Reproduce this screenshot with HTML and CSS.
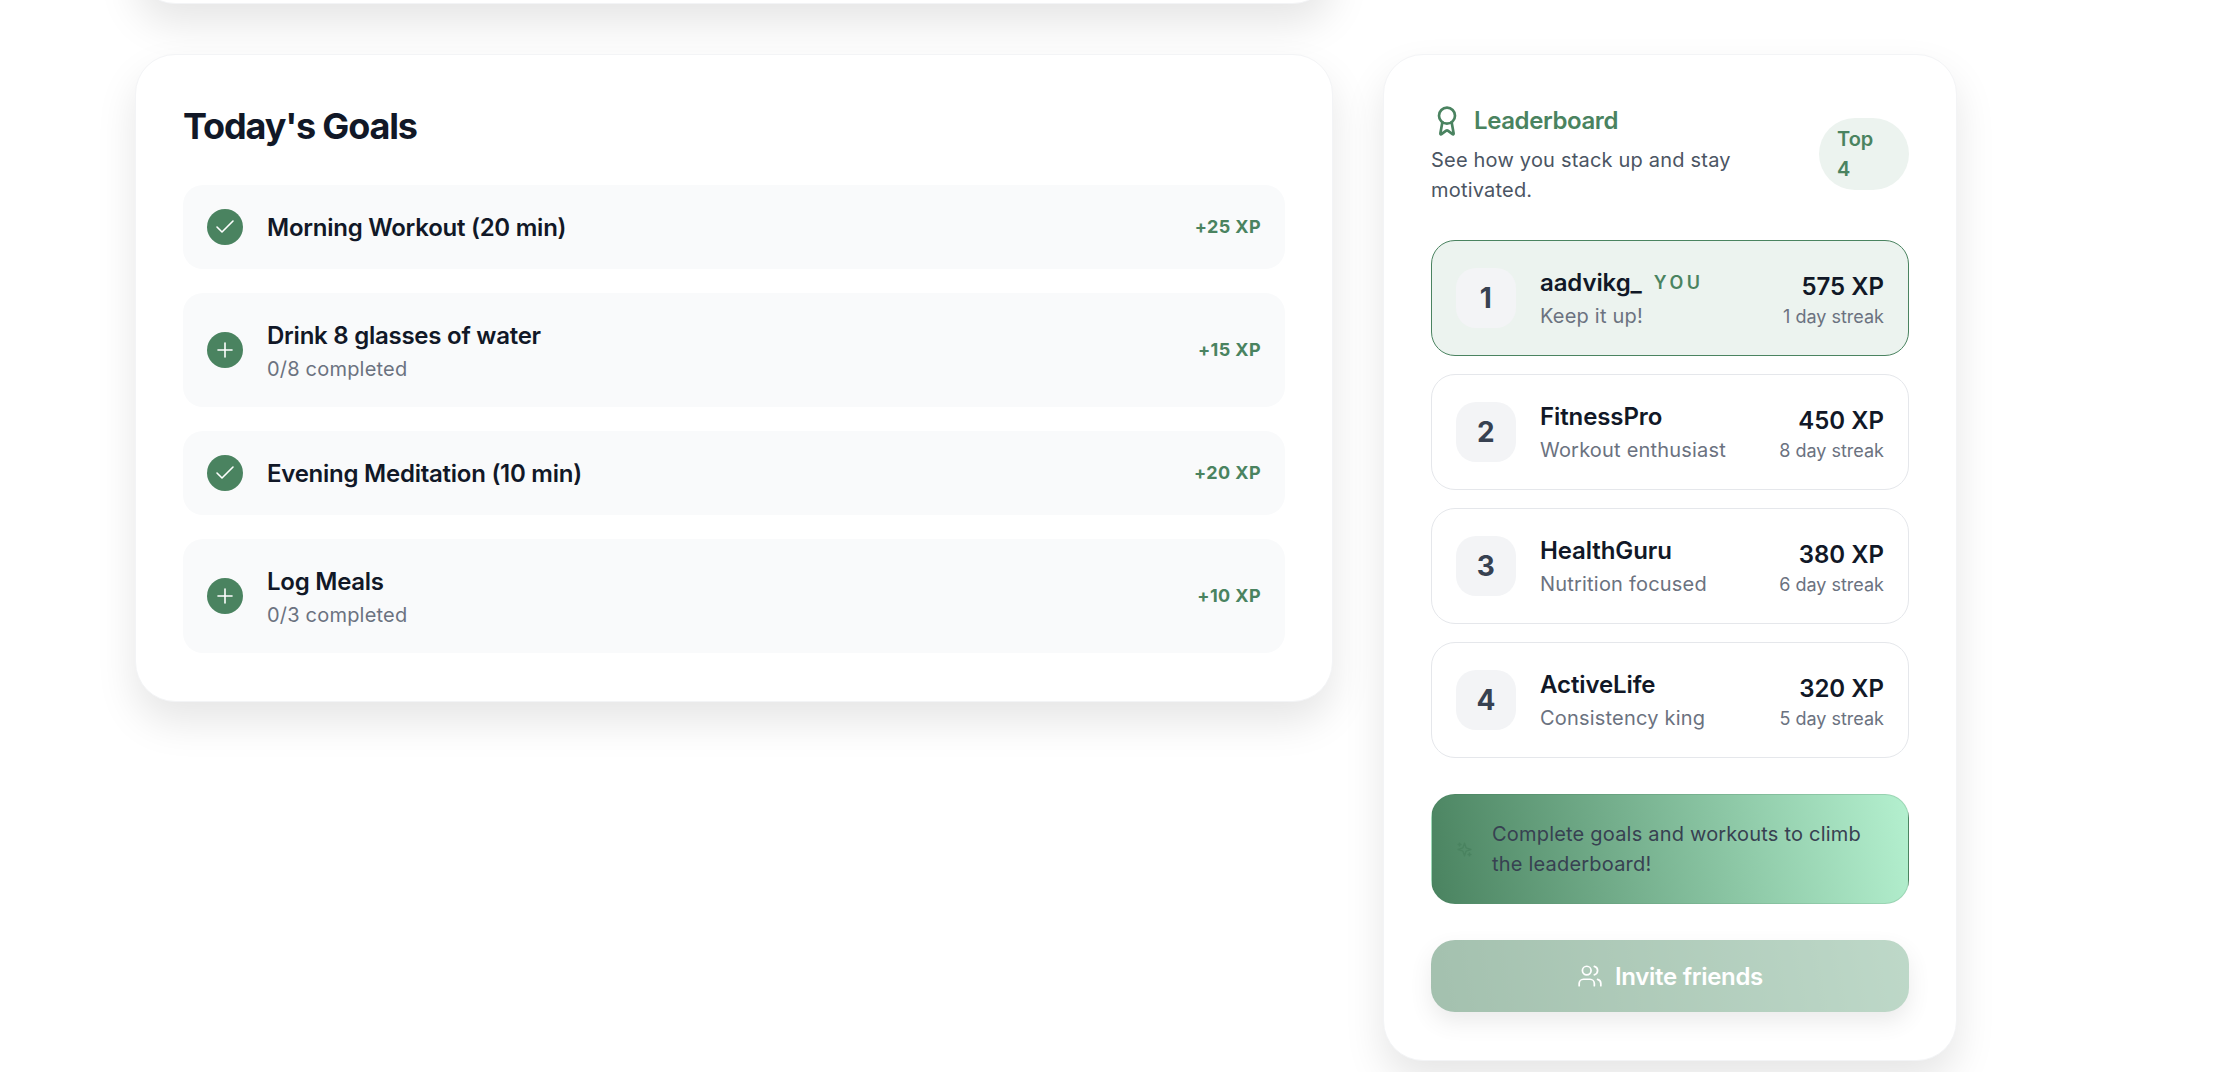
FILE: index.html
```html
<!DOCTYPE html>
<html lang="en">
<head>
    <meta charset="UTF-8">
    <meta name="viewport" content="width=device-width, initial-scale=1.0">
    <title>Dashboard</title>
    <link rel="stylesheet" href="styles.css">
</head>
<body>
    <div class="page">
        <div class="prev-card"></div>
        <main class="columns">
            <section class="card goals">
                <h2>Today's Goals</h2>
                <ul class="goal-list">
                    <li class="goal">
                        <span class="goal-icon">
                            <svg viewBox="0 0 24 24"><path d="M20 6 9 17l-5-5"/></svg>
                        </span>
                        <div class="goal-text">
                            <h3>Morning Workout (20 min)</h3>
                        </div>
                        <span class="goal-xp">+25 XP</span>
                    </li>
                    <li class="goal">
                        <span class="goal-icon">
                            <svg viewBox="0 0 24 24"><path d="M5 12h14"/><path d="M12 5v14"/></svg>
                        </span>
                        <div class="goal-text">
                            <h3>Drink 8 glasses of water</h3>
                            <p>0/8 completed</p>
                        </div>
                        <span class="goal-xp">+15 XP</span>
                    </li>
                    <li class="goal">
                        <span class="goal-icon">
                            <svg viewBox="0 0 24 24"><path d="M20 6 9 17l-5-5"/></svg>
                        </span>
                        <div class="goal-text">
                            <h3>Evening Meditation (10 min)</h3>
                        </div>
                        <span class="goal-xp">+20 XP</span>
                    </li>
                    <li class="goal">
                        <span class="goal-icon">
                            <svg viewBox="0 0 24 24"><path d="M5 12h14"/><path d="M12 5v14"/></svg>
                        </span>
                        <div class="goal-text">
                            <h3>Log Meals</h3>
                            <p>0/3 completed</p>
                        </div>
                        <span class="goal-xp">+10 XP</span>
                    </li>
                </ul>
            </section>

            <aside class="card leaderboard">
                <header class="lb-header">
                    <div class="lb-intro">
                        <div class="lb-title">
                            <svg class="lb-award" viewBox="0 0 24 24">
                                <path d="m15.477 12.89 1.515 8.526a.5.5 0 0 1-.81.47l-3.58-2.687a1 1 0 0 0-1.197 0l-3.586 2.686a.5.5 0 0 1-.81-.469l1.514-8.526"/>
                                <circle cx="12" cy="8" r="6"/>
                            </svg>
                            <h2>Leaderboard</h2>
                        </div>
                        <p>See how you stack up and stay motivated.</p>
                    </div>
                    <span class="lb-badge">Top 4</span>
                </header>

                <ol class="lb-list">
                    <li class="lb-row current">
                        <span class="lb-rank">1</span>
                        <div class="lb-user">
                            <div class="lb-name">aadvikg_ <span class="lb-you">YOU</span></div>
                            <p>Keep it up!</p>
                        </div>
                        <div class="lb-score">
                            <strong>575 XP</strong>
                            <span>1 day streak</span>
                        </div>
                    </li>
                    <li class="lb-row">
                        <span class="lb-rank">2</span>
                        <div class="lb-user">
                            <div class="lb-name">FitnessPro</div>
                            <p>Workout enthusiast</p>
                        </div>
                        <div class="lb-score">
                            <strong>450 XP</strong>
                            <span>8 day streak</span>
                        </div>
                    </li>
                    <li class="lb-row">
                        <span class="lb-rank">3</span>
                        <div class="lb-user">
                            <div class="lb-name">HealthGuru</div>
                            <p>Nutrition focused</p>
                        </div>
                        <div class="lb-score">
                            <strong>380 XP</strong>
                            <span>6 day streak</span>
                        </div>
                    </li>
                    <li class="lb-row">
                        <span class="lb-rank">4</span>
                        <div class="lb-user">
                            <div class="lb-name">ActiveLife</div>
                            <p>Consistency king</p>
                        </div>
                        <div class="lb-score">
                            <strong>320 XP</strong>
                            <span>5 day streak</span>
                        </div>
                    </li>
                </ol>

                <div class="lb-tip">
                    <svg class="lb-sparkle" viewBox="0 0 24 24">
                        <path d="m12 3-1.912 5.813a2 2 0 0 1-1.275 1.275L3 12l5.813 1.912a2 2 0 0 1 1.275 1.275L12 21l1.912-5.813a2 2 0 0 1 1.275-1.275L21 12l-5.813-1.912a2 2 0 0 1-1.275-1.275L12 3Z"/>
                        <path d="M5 3v4"/><path d="M19 17v4"/><path d="M3 5h4"/><path d="M17 19h4"/>
                    </svg>
                    <p>Complete goals and workouts to climb the leaderboard!</p>
                </div>

                <button class="invite" type="button">
                    <svg viewBox="0 0 24 24">
                        <path d="M16 21v-2a4 4 0 0 0-4-4H6a4 4 0 0 0-4 4v2"/>
                        <circle cx="9" cy="7" r="4"/>
                        <path d="M22 21v-2a4 4 0 0 0-3-3.87"/>
                        <path d="M16 3.13a4 4 0 0 1 0 7.75"/>
                    </svg>
                    Invite friends
                </button>
            </aside>
        </main>
    </div>
</body>
</html>
```

FILE: styles.css
```css
* {
    box-sizing: border-box;
    margin: 0;
    padding: 0;
}
html, body {
    height: 1072px;
    overflow: hidden;
}
body {
    font-family: Inter, 'Liberation Sans', sans-serif;
    background-color: #fff;
    color: #111827;
    font-size: 20px;
    line-height: 30px;
    letter-spacing: 0.2px;
}
svg {
    fill: none;
    stroke: currentColor;
    stroke-width: 2;
    stroke-linecap: round;
    stroke-linejoin: round;
    flex-shrink: 0;
}
ul, ol {
    list-style: none;
}
.page {
    padding-left: 135px;
}
.card, .prev-card {
    background-color: #fff;
    border: 1px solid #f3f4f6;
    border-radius: 40px;
    box-shadow: 0 20px 40px rgba(0, 0, 0, 0.1);
}
.prev-card {
    width: 1198px;
    height: 80px;
    margin-top: -76px;
    margin-bottom: 50px;
}
.columns {
    display: grid;
    grid-template-columns: 1198px 574px;
    gap: 50px;
    align-items: start;
}

/* goals */
.goals {
    padding: 48px 47px;
}
.goals h2 {
    font-size: 36px;
    line-height: 46px;
    font-weight: 700;
    letter-spacing: -1.15px;
    margin-bottom: 36px;
}
.goal-list {
    display: flex;
    flex-direction: column;
    gap: 24px;
}
.goal {
    display: flex;
    align-items: center;
    gap: 24px;
    padding: 24px;
    background-color: #f9fafb;
    border-radius: 20px;
}
.goal-icon {
    width: 36px;
    height: 36px;
    border-radius: 50%;
    background-color: #4a8360;
    color: #fff;
    display: flex;
    align-items: center;
    justify-content: center;
}
.goal-icon svg {
    width: 24px;
    height: 24px;
    stroke-width: 1.6;
}
.goal-text {
    flex: 1;
    padding-top: 1px;
    margin-bottom: -1px;
}
.goal-text h3 {
    font-size: 24px;
    line-height: 36px;
    font-weight: 600;
    letter-spacing: -0.25px;
}
.goal-text p {
    color: #6b7280;
}
.goal-xp {
    font-size: 18px;
    font-weight: 700;
    color: #4a8360;
    letter-spacing: 0.4px;
}

/* leaderboard */
.leaderboard {
    padding: 48px 47px;
}
.lb-header {
    display: flex;
    align-items: center;
    gap: 24px;
    margin-bottom: 35px;
}
.lb-intro {
    flex: 1;
    color: #4b5563;
}
.lb-title {
    display: flex;
    align-items: center;
    gap: 11px;
    color: #4a8360;
    margin-bottom: 6px;
}
.lb-title h2 {
    font-size: 24px;
    line-height: 36px;
    font-weight: 600;
    letter-spacing: -0.4px;
}
.lb-award {
    width: 32px;
    height: 32px;
}
.lb-badge {
    width: 90px;
    padding: 6px 18px;
    border-radius: 36px;
    background-color: #ecf3ef;
    color: #4a8360;
    font-weight: 600;
    letter-spacing: 0;
}
.lb-list {
    display: flex;
    flex-direction: column;
    gap: 18px;
    margin-bottom: 36px;
}
.lb-row {
    display: flex;
    align-items: center;
    gap: 24px;
    padding: 24px;
    border: 1px solid #e5e7eb;
    border-radius: 24px;
    background-color: #fff;
}
.lb-row.current {
    background-color: #ecf3ef;
    border-color: #4a8360;
}
.lb-rank {
    width: 60px;
    height: 60px;
    border-radius: 20px;
    background-color: #f3f4f6;
    color: #374151;
    font-size: 28px;
    font-weight: 700;
    display: flex;
    align-items: center;
    justify-content: center;
}
.lb-user {
    flex: 1;
}
.lb-name {
    font-size: 24px;
    line-height: 36px;
    font-weight: 600;
    letter-spacing: -0.1px;
}
.lb-you {
    font-size: 18px;
    font-weight: 600;
    letter-spacing: 3.6px;
    color: #4a8360;
    margin-left: 6px;
    vertical-align: 2px;
}
.lb-user p {
    color: #6b7280;
}
.lb-score {
    text-align: right;
    padding-top: 5px;
    letter-spacing: 0;
}
.lb-score strong {
    display: block;
    font-size: 24px;
    line-height: 32px;
    font-weight: 600;
}
.lb-score span {
    display: block;
    font-size: 18px;
    line-height: 27px;
    color: #6b7280;
}
.lb-tip {
    display: flex;
    align-items: center;
    gap: 19px;
    padding: 24px;
    border: 1px solid rgba(74, 131, 96, 0.2);
    border-radius: 24px;
    background-image: linear-gradient(80deg, #4a8360, #b4f0cf);
    color: #374151;
    margin-bottom: 36px;
}
.lb-sparkle {
    width: 17px;
    height: 17px;
    color: #4a8360;
}
.invite {
    width: 100%;
    height: 72px;
    display: flex;
    align-items: center;
    justify-content: center;
    gap: 12px;
    border: none;
    border-radius: 24px;
    background-image: linear-gradient(80deg, #4a8360, #7fb393);
    color: #fff;
    font-family: inherit;
    font-size: 24px;
    font-weight: 600;
    letter-spacing: -0.3px;
    opacity: 0.5;
    box-shadow: 0 10px 20px rgba(0, 0, 0, 0.15);
}
.invite svg {
    width: 26px;
    height: 26px;
    stroke-width: 1.6;
}
```
